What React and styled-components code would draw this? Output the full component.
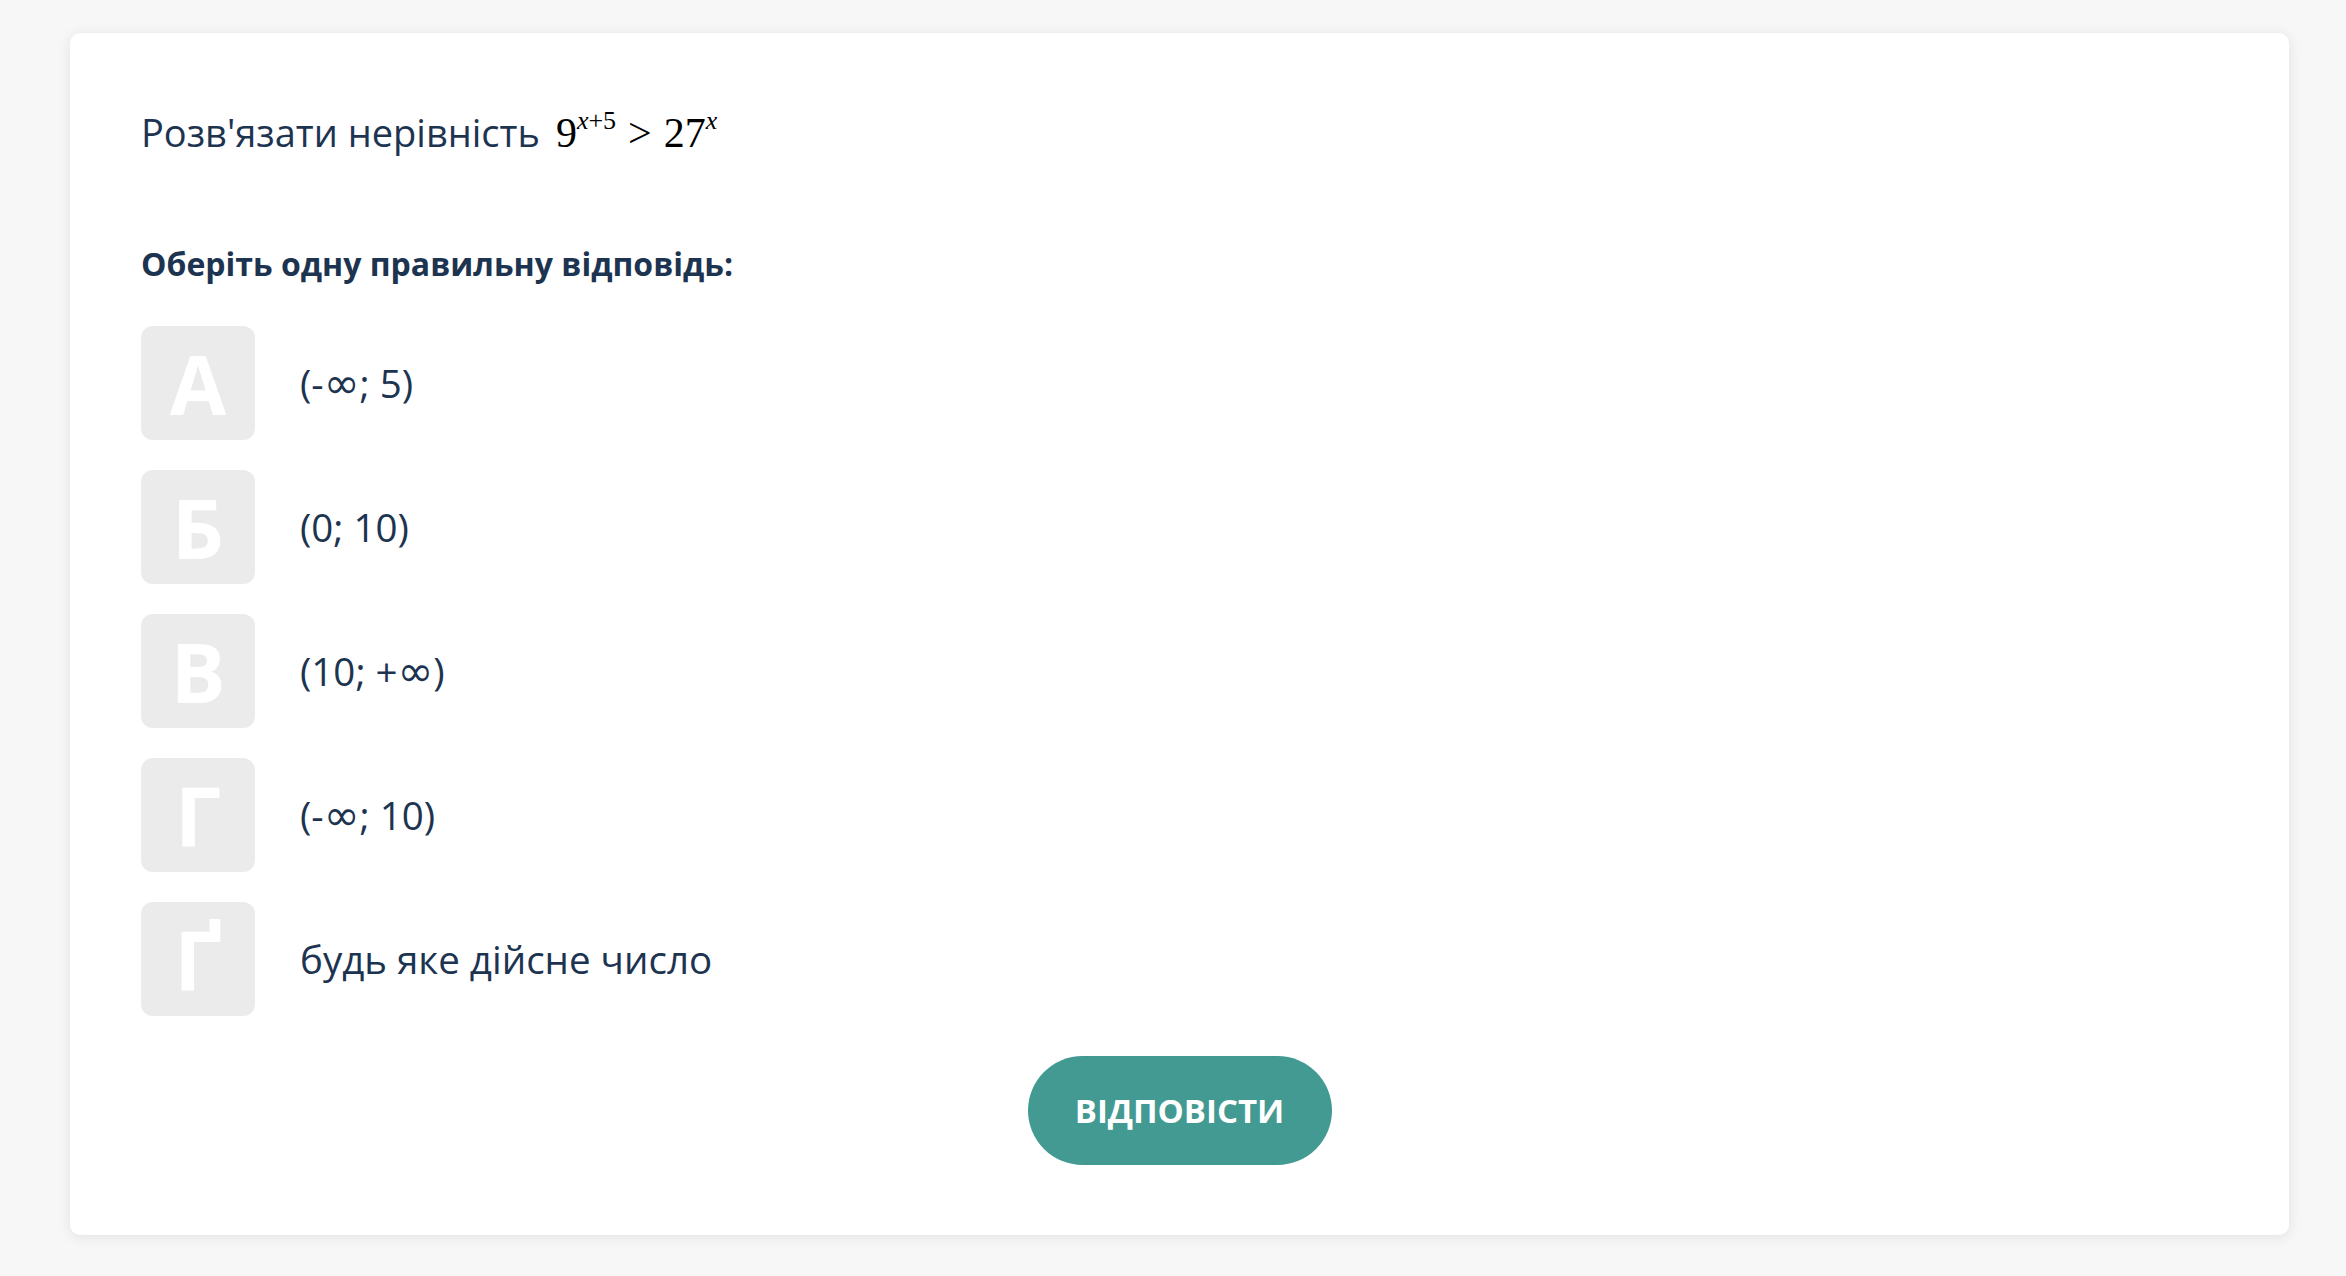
import React from 'react';
import styled, {createGlobalStyle} from 'styled-components';

const GlobalStyle = createGlobalStyle`
    html, body {
        margin: 0;
        padding: 0;
        background: #f7f7f7;
        font-family: "Open Sans", "Noto Sans", sans-serif;
    }
`

const Page = styled.div`
    min-height: 1276px;
    box-sizing: border-box;
    padding: 33px 57px 40px 70px;
`

const Card = styled.div`
    background: #ffffff;
    border-radius: 10px;
    box-shadow: 0 2px 14px rgba(0, 0, 0, 0.09);
    padding: 70px 71px 70px 71px;
    display: flex;
    flex-direction: column;
    color: #1d3451;
`

const Question = styled.div`
    font-size: 38px;
    line-height: 58px;
    display: flex;
    align-items: baseline;
    gap: 16px;
`

const Math = styled.span`
    font-family: "Liberation Serif", "Times New Roman", serif;
    font-size: 42px;
    color: #000;

    sup {
        font-size: 26px;
        vertical-align: 18px;
        line-height: 0;
    }

    i {
        font-style: italic;
    }
`

const Rel = styled.span`
    margin: 0 12px;
`

const Prompt = styled.div`
    margin-top: 80px;
    font-size: 32px;
    line-height: 44px;
    font-weight: 700;
`

const Options = styled.div`
    margin-top: 40px;
    display: flex;
    flex-direction: column;
    gap: 30px;
`

const Option = styled.div`
    display: flex;
    align-items: center;
    gap: 45px;
    cursor: pointer;
`

const Letter = styled.div`
    width: 114px;
    height: 114px;
    border-radius: 12px;
    background: ${p => (p.$active ? '#439a93' : '#ebebeb')};
    color: #ffffff;
    font-size: 82px;
    font-weight: 700;
    display: flex;
    align-items: center;
    justify-content: center;
    flex-shrink: 0;
`

const OptionText = styled.div`
    font-size: 38.5px;
    line-height: 50px;
`

const Inf = styled.span`
    font-family: "DejaVu Sans", sans-serif;
    font-size: 43px;
    line-height: 0;
`

const Actions = styled.div`
    margin-top: 40px;
    display: flex;
    justify-content: center;
`

const Button = styled.button`
    width: 304px;
    height: 109px;
    border: none;
    border-radius: 55px;
    background: #429a93;
    color: #ffffff;
    font-family: "Open Sans", "Noto Sans", sans-serif;
    font-size: 33px;
    font-weight: 700;
    cursor: pointer;
`

const options = [
    {letter: 'А', text: ['(-', '∞', '; 5)']},
    {letter: 'Б', text: ['(0; 10)']},
    {letter: 'В', text: ['(10; +', '∞', ')']},
    {letter: 'Г', text: ['(-', '∞', '; 10)']},
    {letter: 'Ґ', text: ['будь яке дійсне число']},
];

const App = () => {
    return (
        <>
            <GlobalStyle />
            <Page>
                <Card>
                    <Question>
                        Розв'язати нерівність
                        <Math>
                            9<sup><i>x</i>+5</sup>
                            <Rel>&gt;</Rel>
                            27<sup><i>x</i></sup>
                        </Math>
                    </Question>
                    <Prompt>Оберіть одну правильну відповідь:</Prompt>
                    <Options>
                        {options.map(o => (
                            <Option key={o.letter}>
                                <Letter>{o.letter}</Letter>
                                <OptionText>
                                    {o.text.map((t, i) =>
                                        t === '∞' ? <Inf key={i}>∞</Inf> : t
                                    )}
                                </OptionText>
                            </Option>
                        ))}
                    </Options>
                    <Actions>
                        <Button>ВІДПОВІСТИ</Button>
                    </Actions>
                </Card>
            </Page>
        </>
    );
};

export default App;
